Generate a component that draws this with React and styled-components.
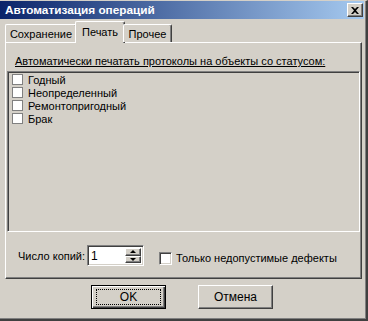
import styled, { createGlobalStyle } from "styled-components";

const GlobalStyle = createGlobalStyle`
  html, body {
    margin: 0;
    padding: 0;
    background: #d4d0c8;
  }
  * {
    box-sizing: border-box;
  }
`;

const Window = styled.div`
  width: 368px;
  height: 321px;
  display: flex;
  flex-direction: column;
  background: #d4d0c8;
  font-family: "Liberation Sans", Arial, sans-serif;
  font-size: 11px;
  color: #000000;
  border-top: 1px solid #d4d0c8;
  border-right: 2px solid #404040;
  border-bottom: 2px solid #404040;
  box-shadow: inset -1px -1px 0 #808080;
  padding-right: 2px;
`;

const TitleBar = styled.div`
  height: 18px;
  display: flex;
  align-items: center;
  justify-content: space-between;
  padding: 0 1px 0 5px;
  background: linear-gradient(to right, #0a246a, #a6caf0);
  color: #ffffff;
  font-weight: 700;
  font-size: 11.8px;
`;

const CloseButton = styled.div`
  width: 16px;
  height: 14px;
  display: flex;
  align-items: center;
  justify-content: center;
  background: #d4d0c8;
  border-top: 1px solid #ffffff;
  border-left: 1px solid #ffffff;
  border-right: 1px solid #404040;
  border-bottom: 1px solid #404040;
  box-shadow: inset -1px -1px 0 #808080;
`;

const Body = styled.div`
  flex: 1;
  display: flex;
  flex-direction: column;
  padding: 3px 2px 0 5px;
`;

const TabStrip = styled.div`
  height: 20px;
  display: flex;
  align-items: flex-end;
  position: relative;
  z-index: 1;
`;

const Tab = styled.div`
  width: ${(p) => (p.$active ? p.$w + 4 : p.$w)}px;
  height: ${(p) => (p.$active ? "22px" : "18px")};
  margin: ${(p) => (p.$active ? "0 -2px -1px" : "0")};
  padding-top: ${(p) => (p.$active ? "3px" : "2px")};
  display: flex;
  justify-content: center;
  background: #d4d0c8;
  border-top: 1px solid #ffffff;
  border-left: 1px solid #ffffff;
  border-right: 1px solid #404040;
  border-top-left-radius: 2px;
  border-top-right-radius: 2px;
  box-shadow: inset -1px 0 0 #808080;
  font-size: 11px;
  line-height: 14px;
  white-space: nowrap;
`;

const Panel = styled.div`
  height: 237px;
  display: flex;
  flex-direction: column;
  border-top: 1px solid #ffffff;
  border-left: 1px solid #ffffff;
  border-right: 1px solid #404040;
  border-bottom: 1px solid #404040;
  box-shadow: inset -1px -1px 0 #808080, inset 1px 1px 0 #d4d0c8;
  padding: 1px;
`;

const Caption = styled.div`
  margin: 11px 0 0 8px;
  height: 15px;
  text-decoration: underline;
  white-space: nowrap;
`;

const ListBox = styled.div`
  margin-top: 1px;
  height: 161px;
  display: flex;
  flex-direction: column;
  padding: 1px 4px;
  border-top: 1px solid #808080;
  border-left: 1px solid #808080;
  border-right: 1px solid #ffffff;
  border-bottom: 1px solid #ffffff;
  box-shadow: inset 1px 1px 0 #404040, inset -1px -1px 0 #d4d0c8;
`;

const ListItem = styled.label`
  height: 13px;
  display: flex;
  align-items: center;
  gap: 5px;
  white-space: nowrap;
`;

const FlatBox = styled.span`
  width: 11px;
  height: 11px;
  background: #ffffff;
  border: 1px solid #808080;
`;

const Footer = styled.div`
  display: flex;
  align-items: center;
  margin-top: 13px;
  padding-left: 11px;
`;

const FieldLabel = styled.span`
  margin-right: 2px;
`;

const SpinBox = styled.div`
  width: 57px;
  height: 21px;
  display: flex;
  background: #ffffff;
  border-top: 1px solid #808080;
  border-left: 1px solid #808080;
  border-right: 1px solid #ffffff;
  border-bottom: 1px solid #ffffff;
  box-shadow: inset 1px 1px 0 #404040, inset -1px -1px 0 #d4d0c8;
  padding: 2px;
`;

const SpinValue = styled.span`
  flex: 1;
  padding-left: 1px;
  font-size: 12px;
  line-height: 16px;
`;

const SpinButtons = styled.div`
  width: 16px;
  display: flex;
  flex-direction: column;
`;

const SpinButton = styled.div`
  flex: 1;
  display: flex;
  align-items: center;
  justify-content: center;
  background: #d4d0c8;
  border-top: 1px solid #ffffff;
  border-left: 1px solid #ffffff;
  border-right: 1px solid #404040;
  border-bottom: 1px solid #404040;
  box-shadow: inset -1px -1px 0 #808080;
`;

const Arrow = styled.span`
  width: 0;
  height: 0;
  border-left: 3px solid transparent;
  border-right: 3px solid transparent;
  ${(p) =>
    p.$up
      ? "border-bottom: 3px solid #000000;"
      : "border-top: 3px solid #000000;"}
`;

const CheckRow = styled.label`
  display: flex;
  align-items: center;
  gap: 4px;
  margin: 5px 0 0 15px;
  white-space: nowrap;
`;

const SunkenBox = styled.span`
  width: 13px;
  height: 13px;
  background: #ffffff;
  border-top: 1px solid #808080;
  border-left: 1px solid #808080;
  border-right: 1px solid #ffffff;
  border-bottom: 1px solid #ffffff;
  box-shadow: inset 1px 1px 0 #404040, inset -1px -1px 0 #d4d0c8;
`;

const ButtonRow = styled.div`
  display: flex;
  gap: 32px;
  padding: 6px 0 0 86px;
`;

const Button = styled.div`
  width: 75px;
  height: 24px;
  display: flex;
  align-items: center;
  justify-content: center;
  background: #d4d0c8;
  font-size: 12px;
  border: 1px solid ${(p) => (p.$default ? "#000000" : "#404040")};
  border-top-color: ${(p) => (p.$default ? "#000000" : "#ffffff")};
  border-left-color: ${(p) => (p.$default ? "#000000" : "#ffffff")};
  box-shadow: ${(p) =>
    p.$default
      ? "inset 1px 1px 0 #ffffff, inset -1px -1px 0 #404040, inset -2px -2px 0 #808080"
      : "inset -1px -1px 0 #808080"};
`;

const FocusRect = styled.span`
  width: 63px;
  height: 14px;
  display: flex;
  align-items: center;
  justify-content: center;
  outline: 1px dotted #000000;
`;

const tabs = [
  { label: "Сохранение", w: 72 },
  { label: "Печать", w: 46 },
  { label: "Прочее", w: 49 },
];

const statuses = ["Годный", "Неопределенный", "Ремонтопригодный", "Брак"];

export default function App() {
  return (
    <>
      <GlobalStyle />
      <Window>
        <TitleBar>
          <span>Автоматизация операций</span>
          <CloseButton>
            <svg width="8" height="7" viewBox="0 0 8 7">
              <path
                d="M0 0h2l2 2 2-2h2L5 3.5 8 7H6L4 5 2 7H0l3-3.5z"
                fill="#000000"
              />
            </svg>
          </CloseButton>
        </TitleBar>
        <Body>
          <TabStrip>
            {tabs.map((t) => (
              <Tab key={t.label} $w={t.w} $active={t.label === "Печать"}>
                {t.label}
              </Tab>
            ))}
          </TabStrip>
          <Panel>
            <Caption>
              Автоматически печатать протоколы на объекты со статусом:
            </Caption>
            <ListBox>
              {statuses.map((s) => (
                <ListItem key={s}>
                  <FlatBox />
                  {s}
                </ListItem>
              ))}
            </ListBox>
            <Footer>
              <FieldLabel>Число копий:</FieldLabel>
              <SpinBox>
                <SpinValue>1</SpinValue>
                <SpinButtons>
                  <SpinButton>
                    <Arrow $up />
                  </SpinButton>
                  <SpinButton>
                    <Arrow />
                  </SpinButton>
                </SpinButtons>
              </SpinBox>
              <CheckRow>
                <SunkenBox />
                Только недопустимые дефекты
              </CheckRow>
            </Footer>
          </Panel>
          <ButtonRow>
            <Button $default>
              <FocusRect>OK</FocusRect>
            </Button>
            <Button>Отмена</Button>
          </ButtonRow>
        </Body>
      </Window>
    </>
  );
}
